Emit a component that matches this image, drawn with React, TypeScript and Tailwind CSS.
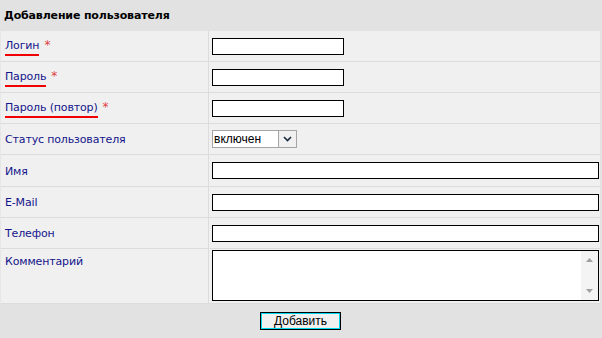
import React from "react";

const labelCls = "text-[11px] tracking-[-0.15px] text-[#14148c]";

function Required({ text }: { text: string }) {
  return (
    <span className="inline-flex items-start gap-[5px] mt-[3px]">
      <span className={`${labelCls} border-b-2 border-[#f00000] pb-[2px] leading-[13px]`}>{text}</span>
      <span className="text-[12px] leading-[12px] text-[#e04040]">*</span>
    </span>
  );
}

function Plain({ text }: { text: string }) {
  return <span className={`${labelCls} mt-[3px]`}>{text}</span>;
}

function TextInput({ wide }: { wide?: boolean }) {
  return (
    <div
      className={`h-[17px] border border-black bg-white ${wide ? "w-[387px]" : "w-[132px]"}`}
    />
  );
}

function Row({
  label,
  children,
  h = "h-[31px]",
  top,
}: {
  label: React.ReactNode;
  children: React.ReactNode;
  h?: string;
  top?: boolean;
}) {
  return (
    <div className={`flex ${h} border-b border-[#dcdcdc]`}>
      <div
        className={`w-[208px] flex ${top ? "items-start pt-[2px]" : "items-center"} pl-[4px] border-r border-[#dcdcdc]`}
      >
        {label}
      </div>
      <div className={`flex-1 flex ${top ? "items-start pt-[1px]" : "items-center"} pl-[3px]`}>{children}</div>
    </div>
  );
}

export default function App() {
  return (
    <div className="w-[602px] h-[338px] bg-[#e2e2e2] font-['DejaVu_Sans',Verdana,sans-serif]">
      {/* header */}
      <div className="h-[31px] flex items-center pl-[4px] pt-[1px] text-[11px] tracking-[-0.15px] font-bold text-black">
        Добавление пользователя
      </div>

      <div className="mr-[2px] bg-[#f0f0f0] border-l border-[#e6e6e6]">
        <Row label={<Required text="Логин" />}>
          <TextInput />
        </Row>
        <Row label={<Required text="Пароль" />}>
          <TextInput />
        </Row>
        <Row label={<Required text="Пароль (повтор)" />}>
          <TextInput />
        </Row>
        <Row label={<Plain text="Статус пользователя" />}>
          <div className="flex h-[18px] w-[85px] border border-[#a5a5a5] bg-white">
            <span className="flex-1 flex items-center pl-[1px] text-[12px] text-black font-['Liberation_Sans',Arial,sans-serif]">
              включен
            </span>
            <span className="w-[18px] flex items-center justify-center border-l border-[#a5a5a5] bg-[#f0f0f0]">
              <svg width="9" height="6" viewBox="0 0 9 6">
                <path d="M1 1 L4.5 4.5 L8 1" stroke="#1a2a40" strokeWidth="1.6" fill="none" />
              </svg>
            </span>
          </div>
        </Row>
        <Row label={<Plain text="Имя" />} h="h-[32px]">
          <TextInput wide />
        </Row>
        <Row label={<Plain text="E-Mail" />}>
          <TextInput wide />
        </Row>
        <Row label={<Plain text="Телефон" />}>
          <TextInput wide />
        </Row>
        <Row label={<Plain text="Комментарий" />} h="h-[55px]" top>
          <div className="flex w-[387px] h-[51px] border border-black bg-white">
            <div className="flex-1" />
            <div className="w-[17px] flex flex-col items-center justify-between py-[7px] bg-[#f4f4f4]">
              <svg width="7" height="4" viewBox="0 0 7 4">
                <path d="M0 4 L3.5 0 L7 4 Z" fill="#a0a0a0" />
              </svg>
              <svg width="7" height="4" viewBox="0 0 7 4">
                <path d="M0 0 L3.5 4 L7 0 Z" fill="#a0a0a0" />
              </svg>
            </div>
          </div>
        </Row>
      </div>

      <div className="flex justify-center pt-[8px] pr-[1px]">
        <button className="h-[18px] w-[81px] border border-black bg-[#f0f0f0] shadow-[inset_0_0_0_1px_#00d8f0] text-[12px] leading-[14px] text-black font-['Liberation_Sans',Arial,sans-serif]">
          Добавить
        </button>
      </div>
    </div>
  );
}
